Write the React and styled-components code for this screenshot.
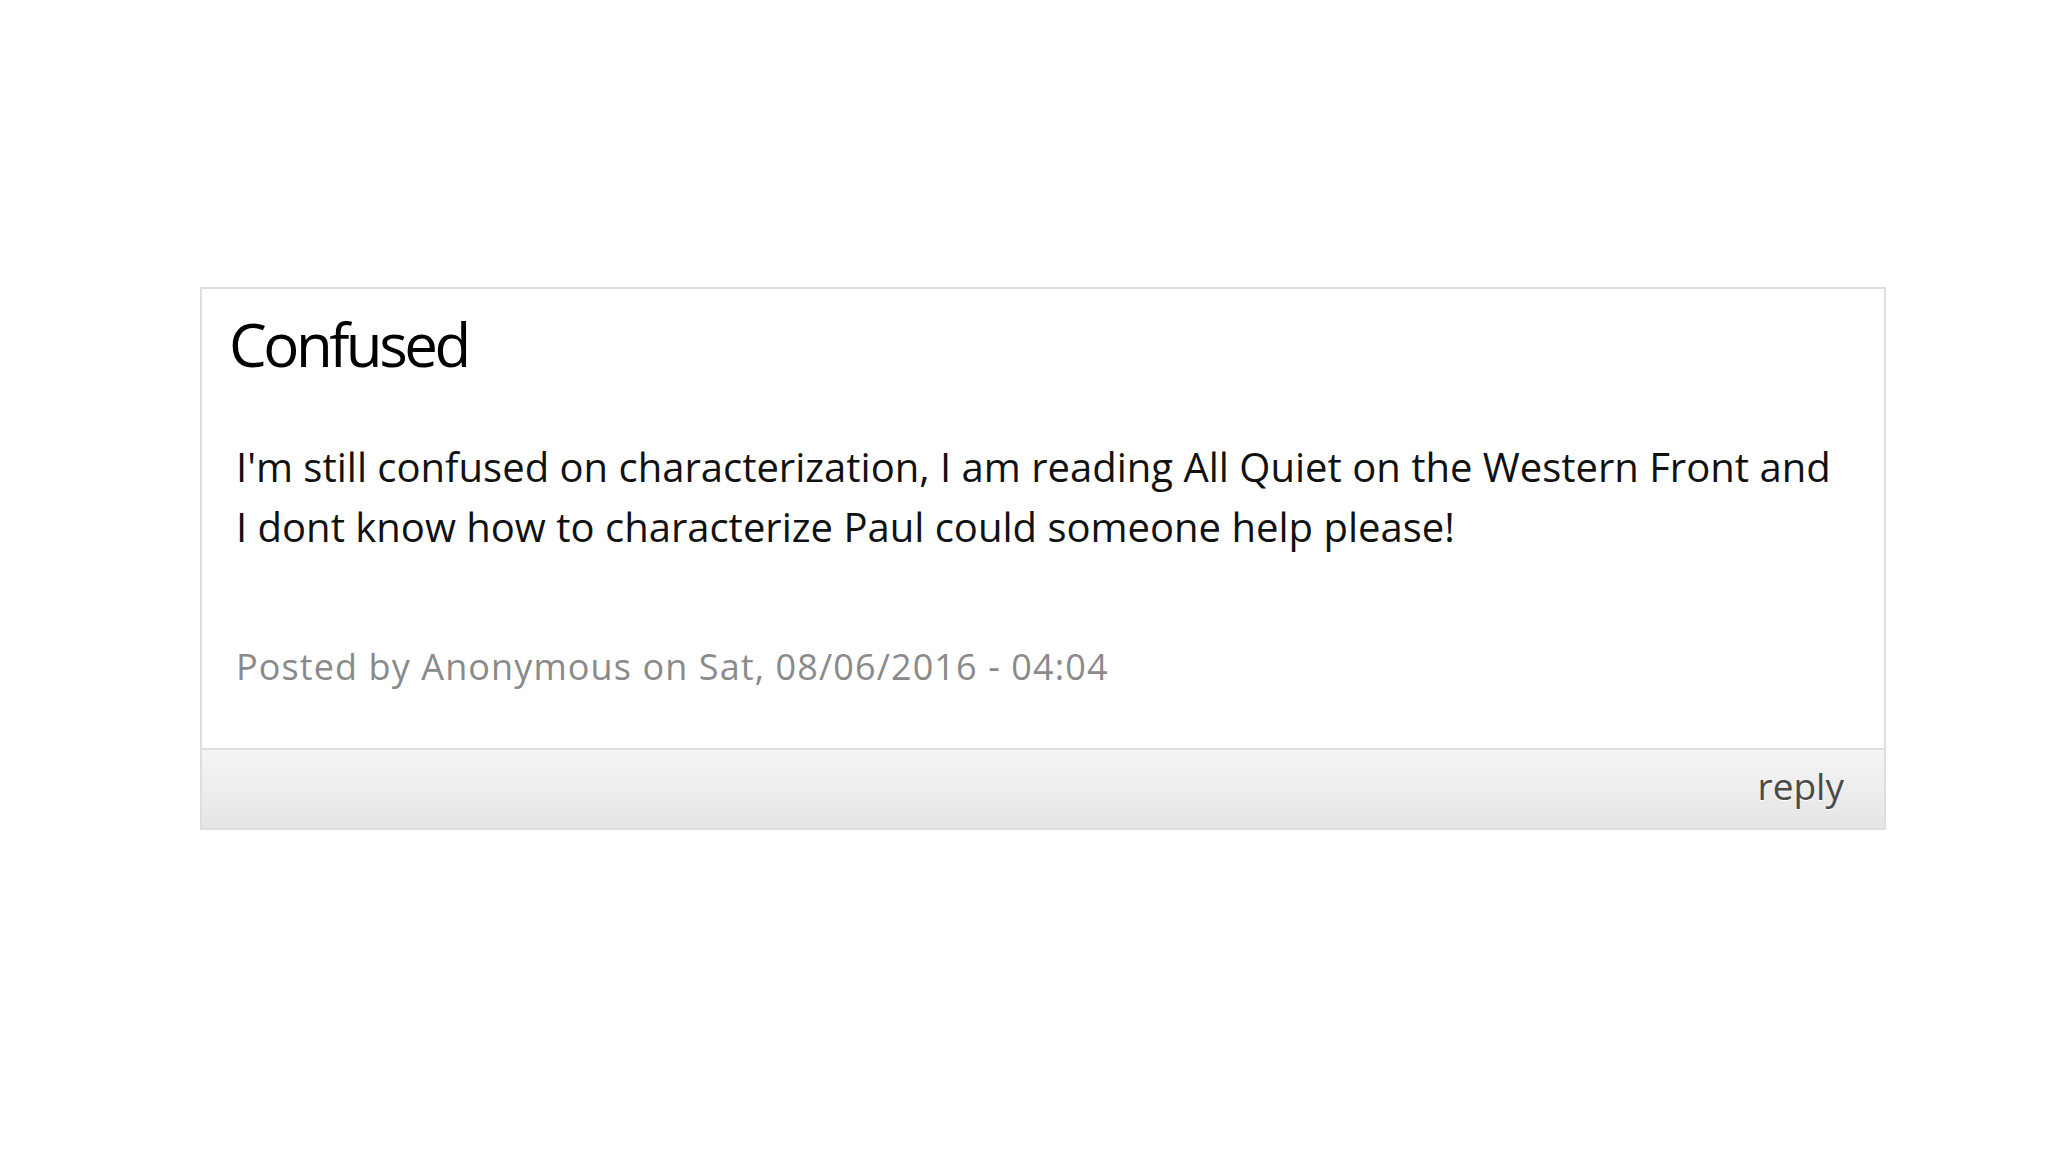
import React from 'react';
import styled, { createGlobalStyle } from 'styled-components';

const GlobalStyle = createGlobalStyle`
  html, body {
    margin: 0;
    padding: 0;
    background: #fff;
  }
  body {
    font-family: "Open Sans", "DejaVu Sans", sans-serif;
    color: #111;
  }
`;

const Page = styled.div`
  width: 2048px;
  height: 1152px;
  padding: 287px 0 0 200px;
  box-sizing: border-box;
`;

const Card = styled.div`
  width: 1686px;
  box-sizing: border-box;
  border: 2px solid #dedede;
  background: #fff;
`;

const Body = styled.div`
  padding: 25px 40px 59px 27px;
`;

const Title = styled.h2`
  margin: 0;
  font-size: 60px;
  line-height: 60px;
  font-weight: 400;
  color: #000;
  letter-spacing: -3.5px;
`;

const Text = styled.p`
  margin: 63px 0 0 7px;
  font-size: 40px;
  line-height: 60px;
  color: #111;
`;

const Meta = styled.div`
  margin: 88px 0 0 7px;
  font-size: 36px;
  line-height: 44px;
  color: #8a8a8a;
  letter-spacing: 1.1px;
`;

const Footer = styled.div`
  border-top: 2px solid #dedede;
  height: 80px;
  padding: 14px 40px 0 0;
  box-sizing: border-box;
  display: flex;
  justify-content: flex-end;
  background: linear-gradient(to bottom, #f5f5f5, #e5e5e7);
`;

const ReplyLink = styled.a`
  font-size: 37px;
  line-height: 44px;
  color: #4a4a4a;
  text-decoration: none;
  text-shadow: 0 1px 0 #fff;
  cursor: pointer;
`;

export default function App() {
  return (
    <>
      <GlobalStyle />
      <Page>
        <Card>
          <Body>
            <Title>Confused</Title>
            <Text>
              I'm still confused on characterization, I am reading All Quiet on the Western Front and
              I dont know how to characterize Paul could someone help please!
            </Text>
            <Meta>Posted by Anonymous on Sat, 08/06/2016 - 04:04</Meta>
          </Body>
          <Footer>
            <ReplyLink>reply</ReplyLink>
          </Footer>
        </Card>
      </Page>
    </>
  );
}
